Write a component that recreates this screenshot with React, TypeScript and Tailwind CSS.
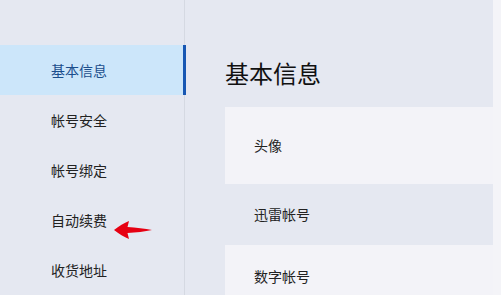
import React from "react";

const navItems = ["基本信息", "帐号安全", "帐号绑定", "自动续费", "收货地址"];

const rows = [
  { label: "头像", h: "h-[77px]", bg: "bg-[#f3f3f8]" },
  { label: "迅雷帐号", h: "h-[61px]", bg: "bg-transparent" },
  { label: "数字帐号", h: "h-[62px]", bg: "bg-[#f3f3f8]" },
];

export default function App() {
  return (
    <div
      className="relative flex w-[501px] h-[295px] overflow-hidden bg-[#f4f4f8] text-[#222]"
      style={{ fontFamily: '"Noto Sans CJK SC", "Microsoft YaHei", sans-serif' }}
    >
      <div className="flex w-[493px] h-full flex-col bg-[#e5e8f1]">
        <div className="h-[3px] bg-[#ebecf2]" />
        <div className="flex flex-1">
          {/* Sidebar */}
          <div className="w-[185px] shrink-0 pt-[45px] border-r border-[#d5d9e2]">
            {navItems.map((item, i) => (
              <div
                key={item}
                className={`relative h-[50px] flex items-center pl-[51px] text-[14px] ${
                  i === 0 ? "bg-[#cce6fa] text-[#1b4e8c]" : ""
                }`}
              >
                {item}
                {i === 0 && (
                  <div className="absolute right-[-2px] top-0 h-full w-[3px] bg-[#1757b3]" />
                )}
              </div>
            ))}
          </div>

          {/* Content */}
          <div className="flex-1 pl-[40px] pt-[57px]">
            <h1 className="text-[24px] leading-[32px] text-[#111] mb-[18px]">基本信息</h1>
            {rows.map((r) => (
              <div key={r.label} className={`${r.h} ${r.bg} flex items-center pl-[29px] text-[14px]`}>
                {r.label}
              </div>
            ))}
          </div>
        </div>
      </div>

      {/* red annotation arrow */}
      <svg
        className="absolute left-[112px] top-[219px]"
        width="44"
        height="22"
        viewBox="0 0 44 22"
      >
        <path
          d="M2 11 C7 7 12 4 17 2 L15.5 8 C24 8.5 33 9.5 40 11 C33 12.5 24 13.5 15.5 14 L17 20 C12 18 7 15 2 11 Z"
          fill="#e60012"
        />
      </svg>
    </div>
  );
}
